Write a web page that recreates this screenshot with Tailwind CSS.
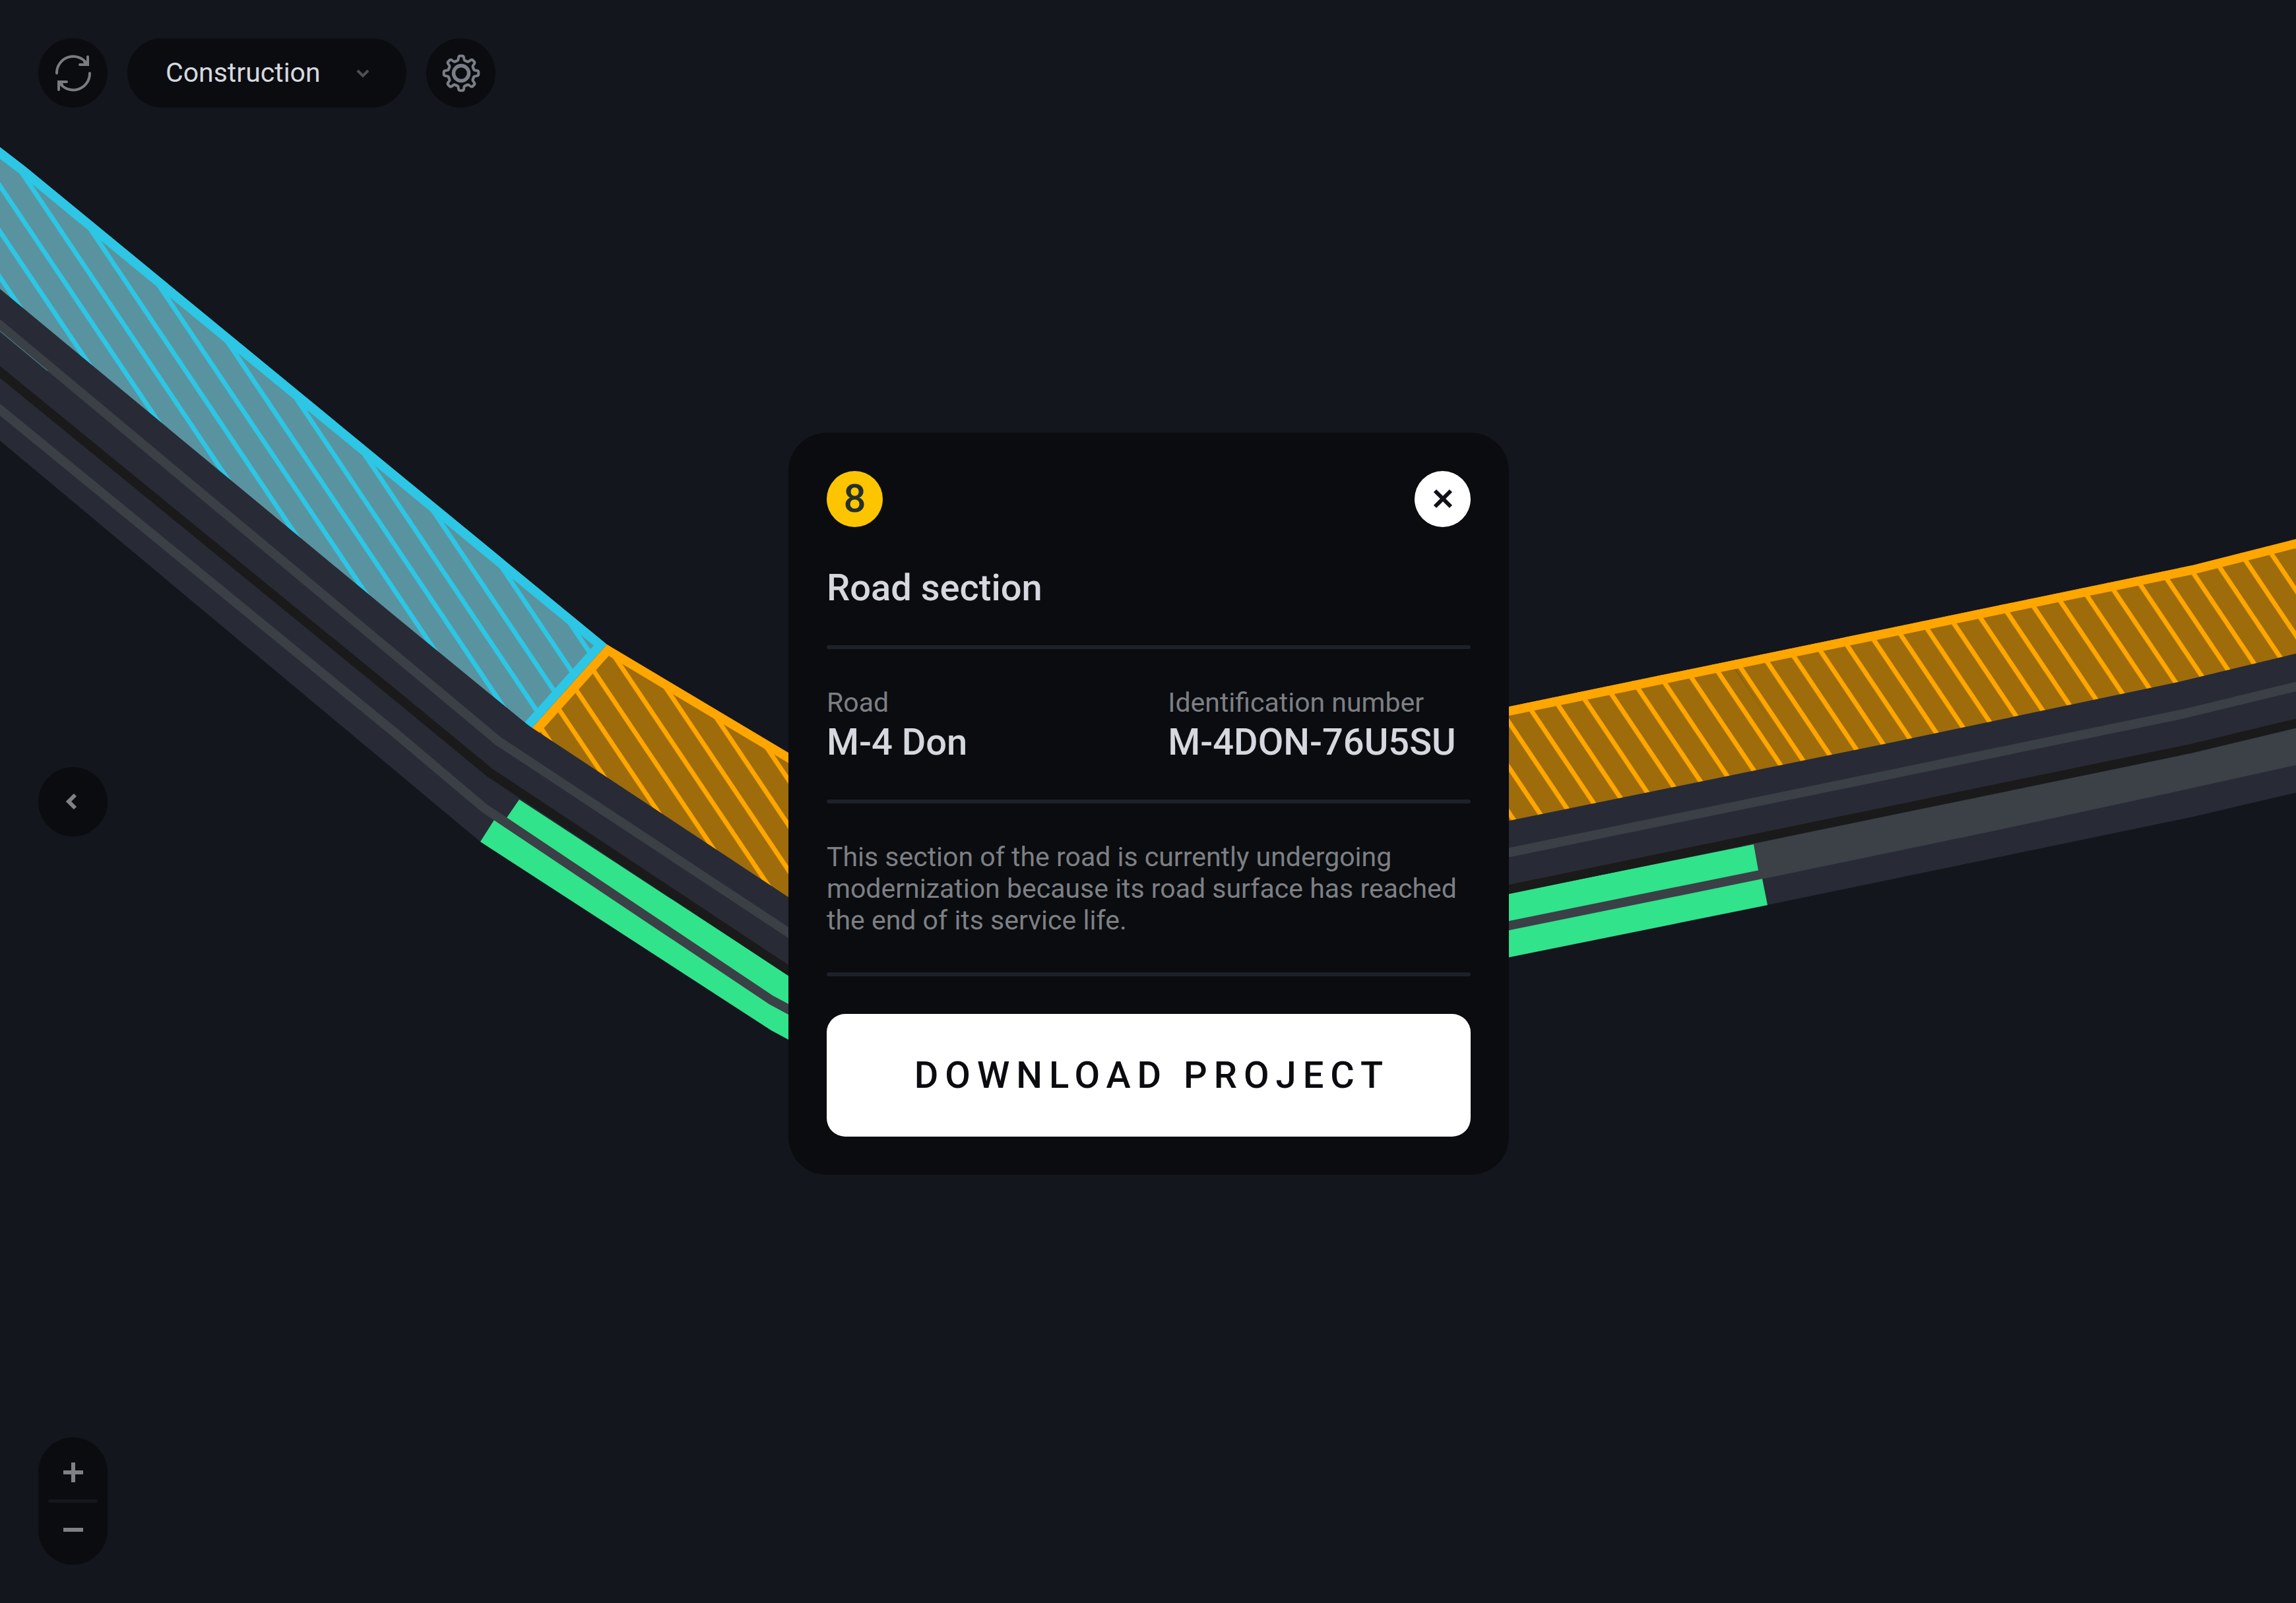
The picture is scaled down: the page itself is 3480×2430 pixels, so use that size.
<!DOCTYPE html>
<html lang="en">
  <head>
    <meta charset="UTF-8" />
    <meta name="viewport" content="width=device-width, initial-scale=1.0" />
    <script src="https://cdn.jsdelivr.net/npm/@tailwindcss/browser@4"></script>
    <title>Road map</title>
  </head>
  <body class="bg-[#13161d] font-['Roboto',sans-serif] text-[#d6d8df]">
    <div class="relative min-h-screen overflow-hidden">
      <!-- map -->
      <svg
        class="absolute inset-0 size-full"
        viewBox="0 0 3480 2430"
        preserveAspectRatio="xMidYMid slice"
        fill="none"
        aria-hidden="true"
      >
        <defs>
          <pattern id="hatch-blue" width="40" height="38.6" patternUnits="userSpaceOnUse" patternTransform="translate(0 281) rotate(56.1) translate(0 -3)">
            <rect width="40" height="38.6" fill="#5993a0" />
            <rect width="40" height="7" fill="#2dc6e4" />
          </pattern>
          <pattern id="hatch-left" width="40" height="38.2" patternUnits="userSpaceOnUse" patternTransform="translate(916 1177) rotate(56.1) translate(0 -3)">
            <rect width="40" height="38.2" fill="#9e6c0b" />
            <rect width="40" height="7" fill="#ffa600" />
          </pattern>
          <pattern id="hatch-mid" width="40" height="38.2" patternUnits="userSpaceOnUse" patternTransform="translate(2323 1079) rotate(56.1) translate(0 -3)">
            <rect width="40" height="38.2" fill="#9e6c0b" />
            <rect width="40" height="7" fill="#ffa600" />
          </pattern>
          <pattern id="hatch-right" width="40" height="38.2" patternUnits="userSpaceOnUse" patternTransform="translate(2882 963) rotate(56.1) translate(0 -3)">
            <rect width="40" height="38.2" fill="#9e6c0b" />
            <rect width="40" height="7" fill="#ffa600" />
          </pattern>
          <clipPath id="clip-blue">
            <path d="M-40 194L0 223L39 253L920 977L806 1104L-40 420Z" />
          </clipPath>
          <clipPath id="clip-orange">
            <path d="M920 977L1195 1141L1250 1175L2230 1083L2288 1071L2860 953L3323 857L3520 807V1000L2230 1280L1250 1420L806 1104Z" />
          </clipPath>
        </defs>

        <!-- finished section -->
        <g clip-path="url(#clip-blue)">
          <path d="M-40 194L0 223L39 253L920 977L806 1104L-40 420Z" fill="url(#hatch-blue)" />
          <path d="M-40 194L0 223L39 253L920 977L806 1104" stroke="#2dc6e4" stroke-width="28" />
        </g>

        <!-- section under construction -->
        <g clip-path="url(#clip-orange)">
          <path d="M920 977L1250 1175L1500 1180V1420H1250L806 1104Z" fill="url(#hatch-left)" />
          <path d="M2100 1000H2620L2737 1174L2100 1320Z" fill="url(#hatch-mid)" />
          <path d="M2619 998L3520 790V1010L2736 1174Z" fill="url(#hatch-right)" />
          <path d="M806 1104L920 977L1195 1141L1250 1175L2230 1083L2288 1071L2860 953L3323 857L3520 807" stroke="#ffa600" stroke-width="27" />
        </g>

        <!-- road bed -->
        <path
          d="M-40 405L0 438L600 935L800 1099L1195 1360L1250 1396L2230 1256L2288 1244L2860 1127L3301 1034L3520 981V1192L3320 1239L2678 1372L2288 1451L2230 1463L1250 1601L1195 1576L1169 1562L728 1276L0 668L-40 635Z"
          fill="#282b36"
        />
        <path d="M2640 1276L2860 1231L3320 1138L3520 1090V1151L3307 1198L3020 1260L2640 1339Z" fill="#3b4146" />
        <path d="M-40 460L0 493L756 1124L1250 1450L2230 1304L2860 1175L3310 1082L3520 1031" stroke="#3b4047" stroke-width="14" />
        <path d="M0 502L72 562" stroke="#5993a0" />
        <path d="M787 1212L1195 1479L1250 1515L2230 1366L2658 1280L2666 1325L2230 1414L1250 1558L1169 1516L765 1244Z" fill="#31e38b" />
        <path d="M749 1243L1169 1516L1250 1558L2230 1412L2670 1327L2679 1372L2288 1451L2230 1463L1250 1601L1195 1576L1169 1562L728 1276Z" fill="#31e38b" />
        <path d="M-40 588L0 621L600 1112L734 1225L1169 1516L1195 1530L1250 1558L2230 1415L2288 1403L2672 1325" stroke="#3b4047" stroke-width="14" stroke-linejoin="round" />
        <path d="M-40 531L0 564L600 1054L742 1171L1195 1471L1250 1507L2230 1360L2288 1348L2860 1230L3320 1135L3520 1087" stroke="#1a1a1a" stroke-width="14" />
      </svg>

      <!-- controls -->
      <div class="relative grid min-h-screen grid-rows-[1fr_auto_1fr] justify-items-start p-[58px]">
        <header class="flex gap-[30px] self-start">
          <button type="button" aria-label="Refresh" class="flex size-[105px] items-center justify-center rounded-full bg-[#0a0c10]">
            <svg class="size-15" viewBox="-30 -30 60 60" fill="none" stroke="#7a7c81" stroke-width="4" stroke-linecap="round">
              <path d="M-25 0A25 25 0 0 1 21 -14M22 -25V-13H10M17 -17L21 -14" />
              <path d="M25 0A25 25 0 0 1 -21 14M-22 25V13H-10M-17 17L-21 14" />
            </svg>
          </button>

          <div class="relative">
            <select
              aria-label="Map mode"
              class="block h-[105px] w-[423px] appearance-none rounded-full bg-[#0a0c10] pl-[58px] pr-24 text-[41px] text-[#d6d8df]"
            >
              <option>Construction</option>
            </select>
            <svg
              class="pointer-events-none absolute inset-y-0 right-[54px] my-auto size-6"
              viewBox="-12 -12 24 24"
              fill="none"
              stroke="#4e5055"
              stroke-width="4"
            >
              <path d="M-8 -4L0 4L8 -4" />
            </svg>
          </div>

          <button type="button" aria-label="Settings" class="flex size-[105px] items-center justify-center rounded-full bg-[#0a0c10]">
            <svg class="size-15" viewBox="-30 -30 60 60" fill="none" stroke="#7a7e86" stroke-width="4" stroke-linecap="round" stroke-linejoin="round">
              <circle r="11.5" stroke-width="5.5" />
              <path id="tooth" d="M-7.7 -18.4L-5.4 -19.2Q-4.4 -19.8 -4.2 -22.5Q-4 -26.3 -1.6 -26.3H1.6Q4 -26.3 4.2 -22.5Q4.4 -19.8 5.4 -19.2L7.7 -18.4" />
              <use href="#tooth" transform="rotate(45)" />
              <use href="#tooth" transform="rotate(90)" />
              <use href="#tooth" transform="rotate(135)" />
              <use href="#tooth" transform="rotate(180)" />
              <use href="#tooth" transform="rotate(225)" />
              <use href="#tooth" transform="rotate(270)" />
              <use href="#tooth" transform="rotate(315)" />
            </svg>
          </button>
        </header>

        <button type="button" aria-label="Back" class="flex size-[105px] items-center justify-center rounded-full bg-[#0a0c10]">
          <svg class="size-8" viewBox="-16 -16 32 32" fill="none" stroke="#7f8186" stroke-width="6">
            <path d="M3 -10L-7 0L3 10" />
          </svg>
        </button>

        <div class="flex w-[105px] flex-col items-center self-end rounded-full bg-[#0a0c10] py-3">
          <button type="button" aria-label="Zoom in" class="flex h-[82px] w-full items-center justify-center">
            <svg class="size-[30px]" viewBox="0 0 30 30" stroke="#7f8186" stroke-width="6">
              <path d="M0 15H30M15 0V30" />
            </svg>
          </button>
          <div class="h-[5px] w-[75px] rounded-full bg-[#15171c]"></div>
          <button type="button" aria-label="Zoom out" class="flex h-[82px] w-full items-center justify-center">
            <svg class="size-[30px]" viewBox="0 0 30 30" stroke="#7f8186" stroke-width="6">
              <path d="M0 15H30" />
            </svg>
          </button>
        </div>
      </div>

      <!-- road section dialog -->
      <div class="pointer-events-none absolute inset-0 grid place-items-center pt-[6px] pl-[2px]">
        <section
          role="dialog"
          aria-labelledby="dialog-title"
          class="pointer-events-auto flex w-[1092px] max-w-full flex-col rounded-[58px] bg-[#0a0c0f] p-[58px]"
        >
          <div class="flex items-center justify-between">
            <span class="flex size-[85px] items-center justify-center rounded-full bg-[#fdc500] text-[60px] leading-none font-medium text-[#24302a]">8</span>
            <button type="button" aria-label="Close" class="flex size-[85px] items-center justify-center rounded-full bg-white">
              <svg class="size-8" viewBox="-16 -16 32 32" fill="none" stroke="#0f1117" stroke-width="6">
                <path d="M-12 -12L12 12M12 -12L-12 12" />
              </svg>
            </button>
          </div>

          <h1 id="dialog-title" class="mt-[60px] text-[56px] leading-[64px] font-medium">Road section</h1>

          <hr class="mt-[55px] mb-[57px] h-[6px] rounded-full border-0 bg-[#1d2129]" />

          <dl class="grid grid-cols-[53%_1fr]">
            <div>
              <dt class="text-[41px] leading-[48px] text-[#7d7f84]">Road</dt>
              <dd class="mt-1 text-[56px] leading-[64px] font-medium">M-4 Don</dd>
            </div>
            <div>
              <dt class="text-[41px] leading-[48px] text-[#7d7f84]">Identification number</dt>
              <dd class="mt-1 text-[56px] leading-[64px] font-medium">M-4DON-76U5SU</dd>
            </div>
          </dl>

          <hr class="mt-[55px] mb-[57px] h-[6px] rounded-full border-0 bg-[#1d2129]" />

          <p class="text-[41px] leading-[48px] text-[#7d7f84]">
            This section of the road is currently undergoing modernization because its road surface has reached the end of its service life.
          </p>

          <hr class="mt-[55px] mb-[57px] h-[6px] rounded-full border-0 bg-[#1d2129]" />

          <button type="button" class="h-[186px] rounded-[28px] bg-white pl-[10px] text-[56px] font-medium tracking-[10px] text-[#0a0c0f] uppercase">
            Download project
          </button>
        </section>
      </div>
    </div>
  </body>
</html>
